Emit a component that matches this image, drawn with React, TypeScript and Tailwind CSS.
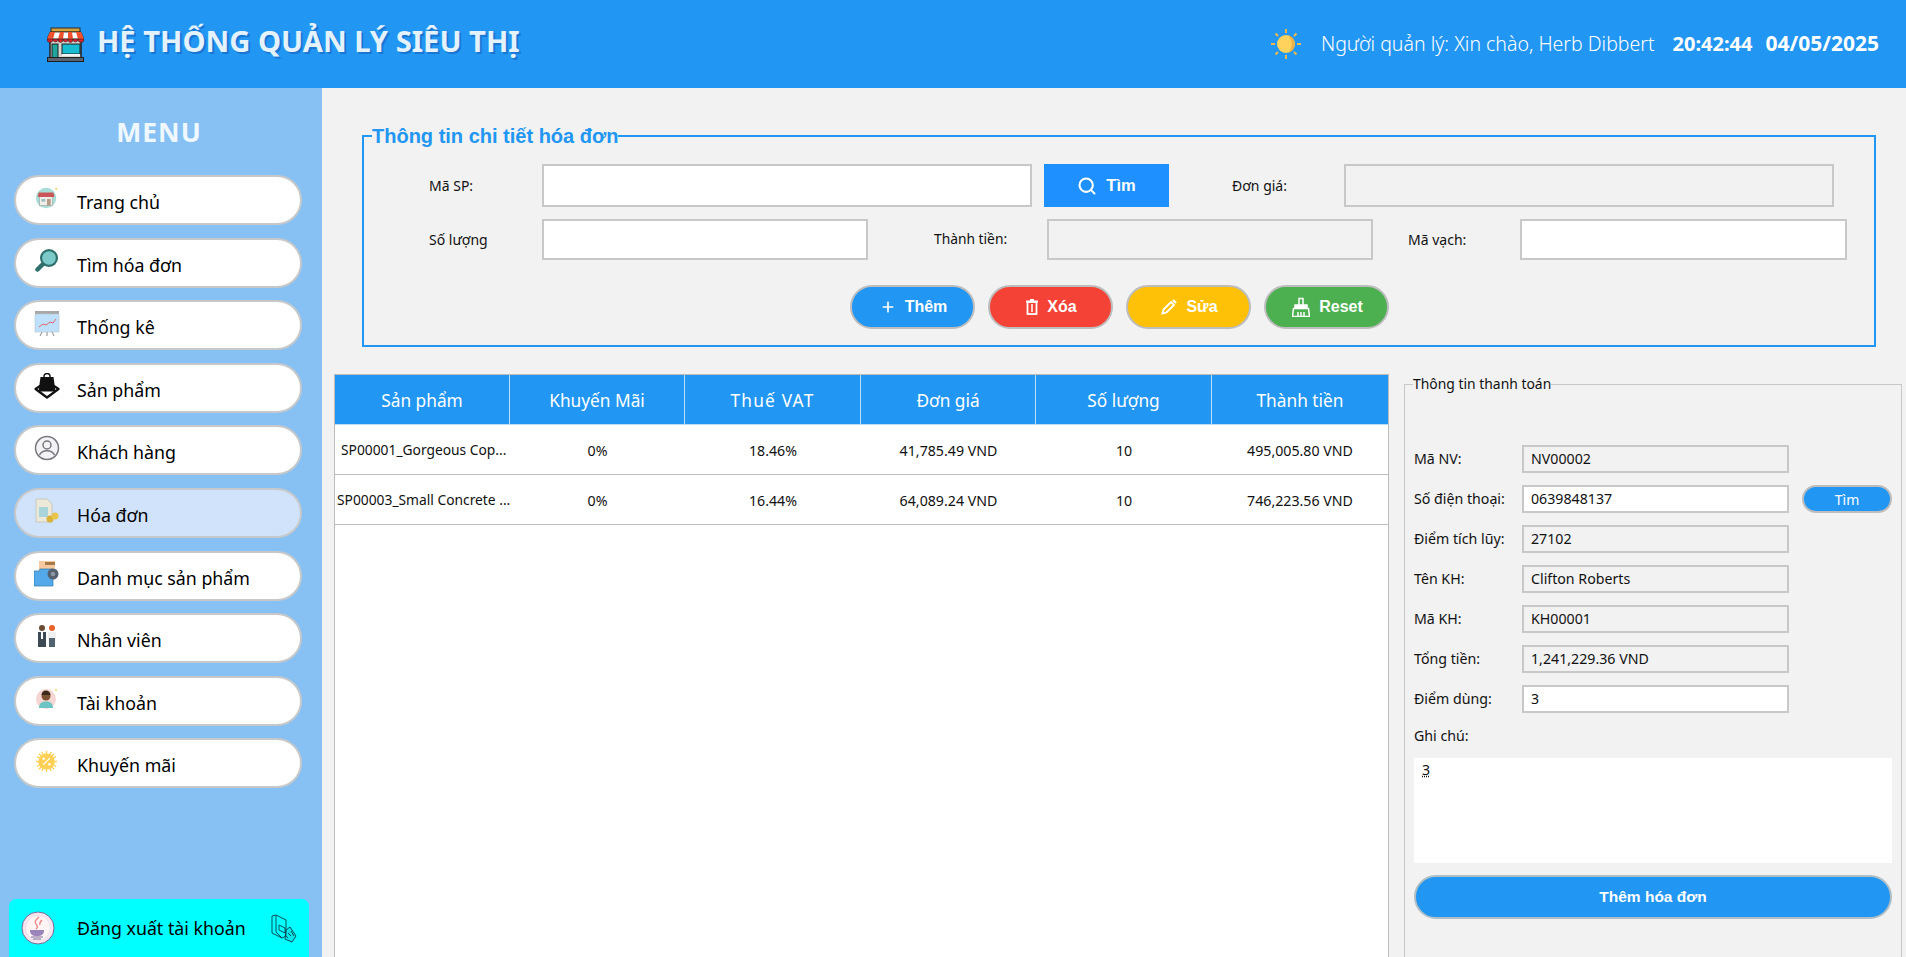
import React from "react";
import { Search, Plus } from "lucide-react";

const Store = () => (
  <svg width="37" height="35" viewBox="0 0 37 35" className="shrink-0">
    <rect x="4" y="1" width="29" height="4" fill="#d9a13a" stroke="#2a2a2a" strokeWidth="1" />
    <rect x="3" y="11" width="31" height="20" fill="#d8d8d4" stroke="#1f1f1f" strokeWidth="1.500" />
    <path d="M3 5h31l3 7H0z" fill="#fff" stroke="#1f1f1f" strokeWidth=".8" />
    <path d="M3 5h5l-2 7H0zM13 5h4l-1 7H11zM21 5h4l1 7H21zM29 5h5l3 7H31z" fill="#f0512d" />
    <path d="M0 12a3 3.500 0 0 0 6 0ZM6 12a2.500 3 0 0 0 5 0ZM11 12a2.500 3.500 0 0 0 5 0ZM16 12a2.500 3 0 0 0 5 0ZM21 12a2.500 3.500 0 0 0 5 0ZM26 12a2.500 3 0 0 0 5 0ZM31 12a3 3.500 0 0 0 6 0Z" fill="#d8232a" stroke="#1f1f1f" strokeWidth=".5" />
    <rect x="5" y="17" width="6" height="14" fill="#1fa59a" stroke="#1f1f1f" />
    <rect x="15" y="17" width="18" height="10" fill="#17bcd0" stroke="#1f1f1f" />
    <rect x="15" y="27" width="18" height="2" fill="#f2f2f2" />
    <rect x="0.500" y="30.500" width="36" height="4" fill="#5b6270" stroke="#1f1f1f" />
  </svg>
);

const Sun = ({ size = 30 }: { size?: number }) => (
  <svg width={size} height={size} viewBox="0 0 30 30" className="shrink-0">
    <g stroke="#eeb84e" strokeWidth="2">
      <path d="M15 0v4M15 26v4M0 15h4M26 15h4M4.500 4.500l2.500 2.500M23 23l2.500 2.500M4.500 25.500 7 23M23 7l2.500-2.500" />
    </g>
    <circle cx="15" cy="15" r="9" fill="#ffd25e" />
    <path d="M17 6.300a9 9 0 0 1 0 17.400 12 12 0 0 0 0-17.400z" fill="#eeb045" />
  </svg>
);

const icons: Record<string, React.ReactNode> = {
  home: (
    <svg width="24" height="24" viewBox="0 0 26 26">
      <circle cx="12" cy="13" r="11" fill="#a8dcd6" />
      <rect x="5" y="11" width="14" height="10" fill="#f0eee6" stroke="#9a9a9a" strokeWidth=".6" />
      <path d="M4 7h16l1 5H3z" fill="#c9555b" />
      <rect x="7" y="14" width="4" height="3" fill="#9dbfc4" />
      <rect x="13" y="14" width="4" height="7" fill="#b59a85" />
      <circle cx="23" cy="3" r="1.200" fill="#f5d55a" />
    </svg>
  ),
  search: (
    <svg width="24" height="26" viewBox="0 0 24 26">
      <path d="M9 15 2.500 21.500" stroke="#2f6f6c" strokeWidth="4.500" strokeLinecap="round" />
      <circle cx="14" cy="10" r="9" fill="#2f6f6c" />
      <circle cx="14" cy="10" r="6.800" fill="#7cc9c9" />
    </svg>
  ),
  chart: (
    <svg width="26" height="27" viewBox="0 0 26 27">
      <rect x="1" y="1" width="24" height="3" fill="#a8a8a8" />
      <rect x="1" y="4" width="24" height="18" fill="#bfe0fa" stroke="#b9c4cc" strokeWidth=".6" />
      <path d="M5 17l4-3 3 1 4-3 3 1 3-4" stroke="#e06a6a" strokeWidth="1" fill="none" />
      <path d="M8 22l-2 4M18 22l2 4M13 22v4" stroke="#8a8a8a" strokeWidth="1" />
    </svg>
  ),
  bag: (
    <svg width="26" height="26" viewBox="0 0 26 26">
      <path d="M1.500 16 13 24.500 24.500 16 20 13H6z" fill="#fff" stroke="#111" strokeWidth="2.200" strokeLinejoin="round" />
      <path d="M6.500 4h13l2 14.500h-17z" fill="#111" />
      <path d="M10 4.500V3a3 2.500 0 0 1 6 0v1.500" fill="none" stroke="#111" strokeWidth="1.400" />
    </svg>
  ),
  user: (
    <svg width="26" height="26" viewBox="0 0 26 26">
      <circle cx="13" cy="13" r="11.500" fill="#f3f3f5" stroke="#77777f" strokeWidth="1.500" />
      <circle cx="13" cy="10" r="4" fill="none" stroke="#77777f" strokeWidth="1.500" />
      <path d="M5.500 20a8 6.500 0 0 1 15 0" fill="none" stroke="#77777f" strokeWidth="1.500" />
    </svg>
  ),
  invoice: (
    <svg width="24" height="26" viewBox="0 0 24 26">
      <path d="M1 1h11l5 5v18H1z" fill="#ece9d8" stroke="#c8c8c0" />
      <rect x="4" y="9" width="9" height="10" fill="#a9d4da" />
      <circle cx="15" cy="21" r="3.500" fill="#d9b23a" />
      <circle cx="20" cy="18" r="3.500" fill="#e8c54a" />
    </svg>
  ),
  folder: (
    <svg width="25" height="26" viewBox="0 0 25 26">
      <rect x="5" y="0" width="16" height="12" fill="#f6c9a0" />
      <rect x="11" y="1" width="10" height="3" fill="#a87a4a" />
      <path d="M0 10h5l1-2h13v17H0z" fill="#53a9e9" stroke="#2f78b0" strokeWidth=".7" />
      <circle cx="19" cy="13" r="5.500" fill="#556070" />
      <circle cx="19" cy="13" r="2.300" fill="#8a95a5" />
    </svg>
  ),
  staff: (
    <svg width="20" height="24" viewBox="0 0 20 24">
      <circle cx="5" cy="4" r="3" fill="#6b4b34" />
      <rect x="1" y="8" width="8" height="15" fill="#3b4a55" />
      <path d="M4 8h2l0 7H4z" fill="#fff" />
      <circle cx="15" cy="4" r="3" fill="#e8622c" />
      <rect x="11" y="8" width="8" height="9" fill="#f0f0f0" />
      <rect x="12" y="14" width="6" height="9" fill="#51636e" />
    </svg>
  ),
  avatar: (
    <svg width="22" height="22" viewBox="0 0 22 22">
      <circle cx="10" cy="11" r="10" fill="#f6d6d2" />
      <circle cx="10" cy="8" r="4.500" fill="#7a5232" />
      <path d="M5.500 7a4.500 4.500 0 0 1 9 0z" fill="#3c2a1c" />
      <path d="M3 20c0-5 3-6.500 7-6.500s7 1.500 7 6.500z" fill="#6cc4c4" />
      <circle cx="20" cy="2" r="1" fill="#f5d55a" />
    </svg>
  ),
  promo: (
    <svg width="21" height="21" viewBox="0 0 22 22">
      <g stroke="#ffd25e" strokeWidth="1.500">
        <path d="M11 0v22M0 11h22M3 3l16 16M3 19 19 3M6 1l10 20M16 1 6 21M1 6l20 10M1 16 21 6" />
      </g>
      <circle cx="11" cy="11" r="8.500" fill="#ffcf56" />
      <path d="M7.500 14.500l7-7" stroke="#fff" strokeWidth="1.300" />
      <circle cx="8" cy="8" r="1.300" fill="#fff" />
      <circle cx="14" cy="14" r="1.300" fill="#fff" />
    </svg>
  ),
};

const JavaLogo = () => (
  <svg width="34" height="34" viewBox="0 0 34 34" className="shrink-0">
    <circle cx="17" cy="17" r="16" fill="#f7e6ee" stroke="#7a6a9a" strokeWidth="1" />
    <circle cx="17" cy="17" r="12.500" fill="#fff5f5" stroke="#e3d3e3" strokeWidth=".6" />
    <path d="M18 6c-3 3-5 4-3 7s2 3 0 5M21 9c-2 2-3 3-2 5" stroke="#ef7f7f" strokeWidth="1.300" fill="none" />
    <path d="M9 19h14c0 4-2 6-7 6s-7-2-7-6z" fill="#9a84ba" />
    <path d="M10 26h12M12 28h8" stroke="#7a6a9a" strokeWidth="1" />
  </svg>
);

const LogoutIcon = () => (
  <svg width="27" height="29" viewBox="0 0 27 29" className="shrink-0" fill="none" stroke="#0b3c4a" strokeWidth=".9">
    <path d="M1 2l4-1 10 5v16l-4 2L1 19z" />
    <path d="M5 1v17l6 6" />
    <path d="M8 11l6 3v5l-6-3z" />
    <path d="M15 16l4-3 6 9-4 6-7-3z" fill="#17b8c4" fillOpacity=".35" />
    <path d="M17 19l3 3M14 21l3 3M20 17l3 5" />
  </svg>
);

const TrashIcon = () => (
  <svg width="12" height="16" viewBox="0 0 12 16" className="shrink-0" fill="none" stroke="#fff" strokeWidth="1.800">
    <path d="M0 2.500h12M4 1h4" />
    <rect x="1.500" y="3" width="9" height="12" />
    <path d="M6 5v8" strokeWidth="1.500" />
  </svg>
);

const PenIcon = () => (
  <svg width="16" height="16" viewBox="0 0 16 16" className="shrink-0" fill="none" stroke="#fff" strokeWidth="1.900">
    <path d="M1.500 14.500l1-4L10 3l3 3-7.500 7.500z" />
    <path d="M12 1l3 3" strokeWidth="2.400" />
  </svg>
);

const BroomIcon = () => (
  <svg width="18" height="20" viewBox="0 0 18 20" className="shrink-0" fill="none" stroke="#fff" strokeWidth="1.500">
    <path d="M7 8V1.500h4V8" />
    <path d="M3 8h12v3H3z" fill="#fff" />
    <path d="M1.500 11.500h15l1 8h-17z" />
    <path d="M6 15v4M9 15v4M12 15v4" />
  </svg>
);

const Menu = ({ icon, label, active }: { icon: string; label: string; active?: boolean }) => (
  <div
    className={`flex h-[50px] w-[288px] items-center rounded-[25px] border-2 border-[#c6c8ca] ${
      active ? "bg-[#d0e3fb]" : "bg-white"
    }`}
  >
    <div className="flex w-[61px] shrink-0 justify-center pb-1">{icons[icon]}</div>
    <span className="pt-[4px] text-[17.800px] leading-[24px] text-black">{label}</span>
  </div>
);

const Box = ({ w, h, off, children }: { w: string; h: string; off?: boolean; children?: React.ReactNode }) => (
  <div
    className={`flex shrink-0 items-center border-2 border-[#c8c8c8] pl-[7px] text-[14.200px] text-[#111] ${w} ${h} ${
      off ? "bg-[#f2f2f2]" : "bg-white"
    }`}
  >
    {children}
  </div>
);

const Pill = ({ color, children }: { color: string; children: React.ReactNode }) => (
  <div
    className={`flex h-[44px] w-[125px] items-center justify-center gap-[9px] rounded-[22px] border-2 border-[#bdbdbd] pl-[2px] text-[16px] font-bold text-white [font-family:'Liberation_Sans',sans-serif] ${color}`}
  >
    {children}
  </div>
);

const Row = ({ label, value, off = true, extra }: { label: string; value: string; off?: boolean; extra?: React.ReactNode }) => (
  <div className="flex h-[28px] items-center">
    <span className="w-[108px] shrink-0 text-[14.200px] text-[#111]">{label}</span>
    <Box w="w-[267px]" h="h-[28px]" off={off}>
      {value}
    </Box>
    {extra}
  </div>
);

const cols = ["w-[175px]", "w-[175px]", "w-[176px]", "w-[175px]", "w-[176px]", "w-[176px]"];
const headers = [
  { t: "Sản phẩm", c: "" },
  { t: "Khuyến Mãi", c: "" },
  { t: "Thuế VAT", c: "tracking-[1.200px]" },
  { t: "Đơn giá", c: "" },
  { t: "Số lượng", c: "" },
  { t: "Thành tiền", c: "" },
];
const rows = [
  { id: "SP00001_Gorgeous Cop...", pad: "pl-[6px]", v: ["0%", "18.46%", "41,785.49 VND", "10", "495,005.80 VND"] },
  { id: "SP00003_Small Concrete ...", pad: "pl-[2px]", v: ["0%", "16.44%", "64,089.24 VND", "10", "746,223.56 VND"] },
];

export default function App() {
  return (
    <div className="flex h-[957px] w-full flex-col overflow-hidden bg-[#f2f2f2] [font-family:'Noto_Sans',sans-serif]">
      <header className="flex h-[88px] shrink-0 items-center bg-[#2196f3] pl-[47px]">
        <Store />
        <h1 className="mb-[7px] ml-[13px] text-[29.200px] font-bold leading-[40px] text-[#e3f2fd] [text-shadow:2px_2px_0_#1976d2]">
          HỆ THỐNG QUẢN LÝ SIÊU THỊ
        </h1>
        <div className="ml-auto flex items-center pb-[1px] pr-[27px] text-white">
          <Sun />
          <span className="ml-[20px] text-[19.500px] font-light">Người quản lý: Xin chào, Herb Dibbert</span>
          <span className="ml-[18px] text-[20px] font-bold">20:42:44</span>
          <span className="ml-[13px] text-[21px] font-bold">04/05/2025</span>
        </div>
      </header>

      <div className="flex min-h-0 flex-1">
        <aside className="flex w-[322px] shrink-0 flex-col bg-[#87c1f3] pl-[14px]">
          <div className="ml-[1px] mt-[26px] w-[288px] text-center text-[26.500px] font-bold leading-[36px] tracking-[1px] text-[#f0f8ff]">
            MENU
          </div>
          <nav className="mt-[25px] flex flex-col gap-[12.600px]">
            <Menu icon="home" label="Trang chủ" />
            <Menu icon="search" label="Tìm hóa đơn" />
            <Menu icon="chart" label="Thống kê" />
            <Menu icon="bag" label="Sản phẩm" />
            <Menu icon="user" label="Khách hàng" />
            <Menu icon="invoice" label="Hóa đơn" active />
            <Menu icon="folder" label="Danh mục sản phẩm" />
            <Menu icon="staff" label="Nhân viên" />
            <Menu icon="avatar" label="Tài khoản" />
            <Menu icon="promo" label="Khuyến mãi" />
          </nav>
          <div className="-ml-[5px] mt-auto flex h-[58px] w-[300px] items-center rounded-t-[7px] bg-[#00ffff] pl-[12px]">
            <JavaLogo />
            <span className="ml-[22px] text-[17.800px] text-black">Đăng xuất tài khoản</span>
            <div className="ml-auto mr-[11px]">
              <LogoutIcon />
            </div>
          </div>
        </aside>

        <main className="flex min-w-0 flex-1 flex-col overflow-hidden">
          <fieldset className="ml-[40px] mt-[38px] h-[221px] w-[1514px] shrink-0 border-2 border-[#2196f3]">
            <legend className="ml-[8px] h-[20px] text-[20px] font-bold leading-[20px] text-[#2196f3] [font-family:'Liberation_Sans',sans-serif]">
              Thông tin chi tiết hóa đơn
            </legend>
            <div className="flex h-[43px] items-center pl-[65px] [margin-top:18px]">
              <span className="w-[113px] shrink-0 text-[14px] text-[#111]">Mã SP:</span>
              <Box w="w-[490px]" h="h-[43px]" />
              <div className="ml-[12px] flex h-[43px] w-[125px] items-center justify-center gap-[9px] bg-[#1e90ff] text-[16.500px] font-bold text-white [font-family:'Liberation_Sans',sans-serif]">
                <Search size={20} strokeWidth={2.500} />
                Tìm
              </div>
              <span className="ml-[63px] w-[112px] shrink-0 text-[14px] text-[#111]">Đơn giá:</span>
              <Box w="w-[490px]" h="h-[43px]" off />
            </div>
            <div className="mt-[12px] flex h-[41px] items-center pl-[65px]">
              <span className="w-[113px] shrink-0 text-[14px] text-[#111]">Số lượng</span>
              <Box w="w-[326px]" h="h-[41px]" />
              <span className="ml-[66px] w-[113px] shrink-0 text-[13.800px] text-[#111]">Thành tiền:</span>
              <Box w="w-[326px]" h="h-[41px]" off />
              <span className="ml-[35px] w-[112px] shrink-0 text-[14px] text-[#111]">Mã vạch:</span>
              <Box w="w-[327px]" h="h-[41px]" />
            </div>
            <div className="ml-[486px] mt-[25px] flex gap-[13px]">
              <Pill color="bg-[#2196f3]">
                <Plus size={16} strokeWidth={2.500} />
                Thêm
              </Pill>
              <Pill color="bg-[#f44336]">
                <TrashIcon />
                Xóa
              </Pill>
              <Pill color="bg-[#ffc107]">
                <PenIcon />
                Sửa
              </Pill>
              <Pill color="bg-[#4caf50]">
                <BroomIcon />
                Reset
              </Pill>
            </div>
          </fieldset>

          <div className="ml-[12px] mt-[27px] flex min-h-0 flex-1">
            <div className="h-[640px] w-[1055px] shrink-0 border-x border-t border-[#bcbcbc] bg-white">
              <div className="flex h-[50px] border-b border-[#bbdefb] bg-[#2196f3]">
                {headers.map((h, i) => (
                  <div
                    key={h.t}
                    className={`flex items-center justify-center pt-[2px] text-[17.300px] text-white ${h.c} ${cols[i]} ${
                      i < 5 ? "border-r border-[#bbdefb]" : ""
                    }`}
                  >
                    {h.t}
                  </div>
                ))}
              </div>
              {rows.map((r) => (
                <div key={r.id} className="flex h-[50px] items-center border-b border-[#bcbcbc] pt-[2px] text-[14.200px] text-[#111]">
                  <div className={`${cols[0]} overflow-hidden whitespace-nowrap text-[13.800px] ${r.pad}`}>{r.id}</div>
                  {r.v.map((c, i) => (
                    <div key={i} className={`${cols[i + 1]} text-center`}>
                      {c}
                    </div>
                  ))}
                </div>
              ))}
            </div>

            <fieldset className="ml-[15px] mt-[1px] h-[640px] w-[498px] shrink-0 border border-[#c8c8c8] pl-[9px]">
              <legend className="-ml-[1px] text-[13.900px] leading-[18px] text-[#111]">Thông tin thanh toán</legend>
              <div className="mt-[52px] flex flex-col gap-[12px]">
                <Row label="Mã NV:" value="NV00002" />
                <Row
                  label="Số điện thoại:"
                  value="0639848137"
                  off={false}
                  extra={
                    <div className="ml-[13px] flex h-[28px] w-[90px] items-center justify-center rounded-[14px] border-2 border-[#bdbdbd] bg-[#2196f3] text-[14px] text-white">
                      Tìm
                    </div>
                  }
                />
                <Row label="Điểm tích lũy:" value="27102" />
                <Row label="Tên KH:" value="Clifton Roberts" />
                <Row label="Mã KH:" value="KH00001" />
                <Row label="Tổng tiền:" value="1,241,229.36 VND" />
                <Row label="Điểm dùng:" value="3" off={false} />
              </div>
              <div className="mt-[14px] h-[18px] text-[14.200px] leading-[18px] text-[#111]">Ghi chú:</div>
              <div className="mt-[13px] h-[105px] w-[478px] bg-white pl-[8px] pt-[2px] text-[14.200px] leading-[20px] text-[#111]">
                <span className="underline decoration-dotted">3</span>
              </div>
              <div className="mt-[12px] flex h-[44px] w-[478px] items-center justify-center rounded-[22px] border-2 border-[#b0bec5] bg-[#2196f3] text-[15.500px] font-bold text-white [font-family:'Liberation_Sans',sans-serif]">
                Thêm hóa đơn
              </div>
            </fieldset>
          </div>
        </main>
      </div>
    </div>
  );
}
